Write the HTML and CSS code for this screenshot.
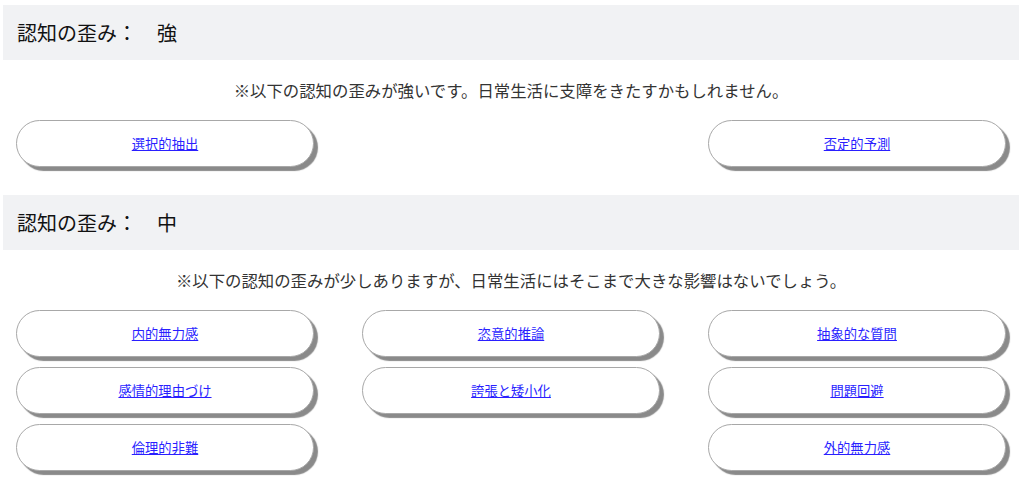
FILE: index.html
```html
<!DOCTYPE html>
<html lang="ja">
<head>
<meta charset="utf-8">
<title>認知の歪み</title>
<link rel="stylesheet" href="styles.css">
</head>
<body>
<div class="page">
  <section class="level">
    <h2 class="level-title">認知の歪み：　強</h2>
    <p class="level-note">※以下の認知の歪みが強いです。日常生活に支障をきたすかもしれません。</p>
    <div class="grid">
      <div class="cell"><a class="pill" href="#">選択的抽出</a></div>
      <div class="cell empty"></div>
      <div class="cell"><a class="pill" href="#">否定的予測</a></div>
    </div>
  </section>
  <section class="level">
    <h2 class="level-title">認知の歪み：　中</h2>
    <p class="level-note">※以下の認知の歪みが少しありますが、日常生活にはそこまで大きな影響はないでしょう。</p>
    <div class="grid">
      <div class="cell"><a class="pill" href="#">内的無力感</a></div>
      <div class="cell"><a class="pill" href="#">恣意的推論</a></div>
      <div class="cell"><a class="pill" href="#">抽象的な質問</a></div>
      <div class="cell"><a class="pill" href="#">感情的理由づけ</a></div>
      <div class="cell"><a class="pill" href="#">誇張と矮小化</a></div>
      <div class="cell"><a class="pill" href="#">問題回避</a></div>
      <div class="cell"><a class="pill" href="#">倫理的非難</a></div>
      <div class="cell empty"></div>
      <div class="cell"><a class="pill" href="#">外的無力感</a></div>
    </div>
  </section>
</div>
</body>
</html>
```
FILE: styles.css
```css
html, body {
  margin: 0;
  padding: 0;
  background: #ffffff;
}
body {
  font-family: "Noto Sans CJK JP", "Noto Sans", sans-serif;
  color: #222;
}
.page {
  padding: 5px 5px 0 3px;
}
.level {
  margin-bottom: 28px;
}
.level-title {
  margin: 0;
  height: 55px;
  display: flex;
  align-items: center;
  padding-left: 14px;
  background: #f1f2f4;
  font-size: 20px;
  font-weight: normal;
  color: #111;
}
.level-note {
  margin: 0;
  height: 60px;
  display: flex;
  align-items: center;
  justify-content: center;
  font-size: 16.4px;
  color: #333;
}
.grid {
  display: grid;
  grid-template-columns: repeat(3, 298px);
  column-gap: 48px;
  row-gap: 10px;
  padding: 0 13px;
}
.pill {
  box-sizing: border-box;
  display: flex;
  align-items: center;
  justify-content: center;
  height: 47px;
  border: 1px solid #a8a8a8;
  border-radius: 24px;
  background: #fff;
  box-shadow: 4px 4px 1px #8a8a8a;
  font-size: 13.3px;
  color: #2a1fff;
  text-decoration: underline;
}
```
